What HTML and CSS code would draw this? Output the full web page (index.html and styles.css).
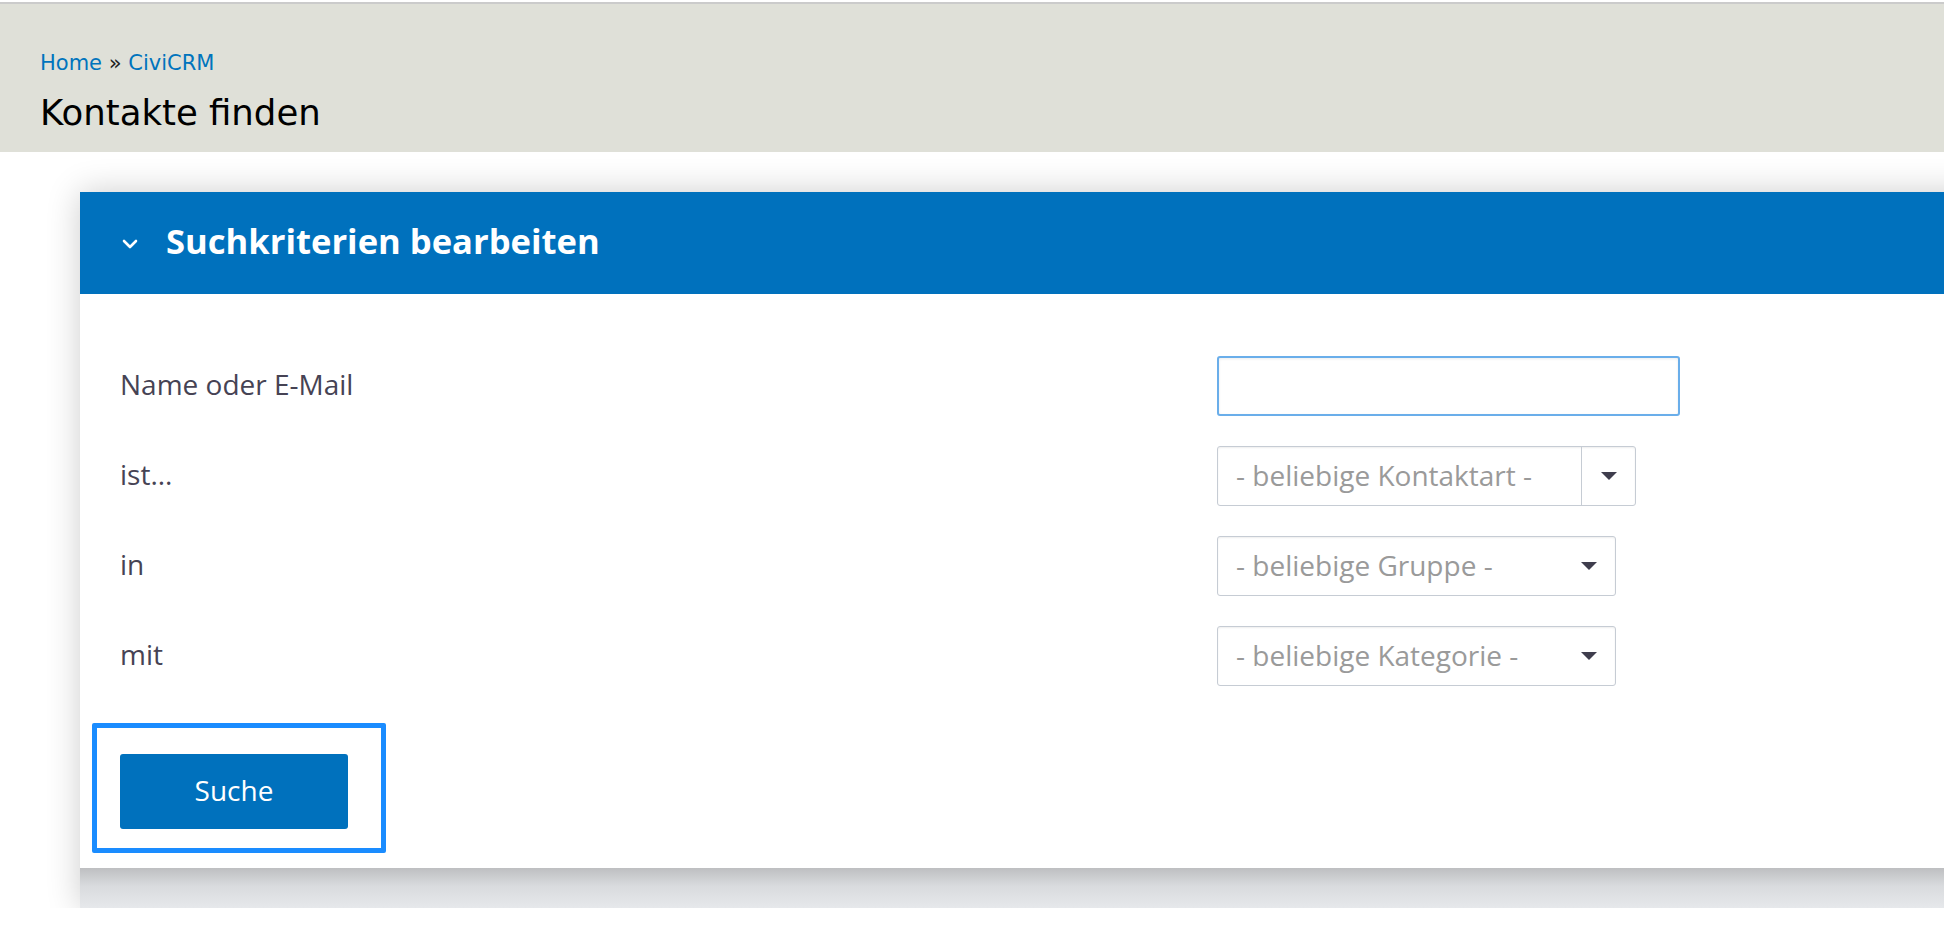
FILE: index.html
```html
<!DOCTYPE html>
<html lang="de">
<head>
  <meta charset="UTF-8">
  <title>Kontakte finden | CiviCRM</title>
  <link rel="stylesheet" href="styles.css">
</head>
<body>

<div class="branding">
  <div class="breadcrumb"><a href="#">Home</a> » <a href="#">CiviCRM</a></div>
  <h1 class="page-title">Kontakte finden</h1>
</div>

<div class="main">
  <div class="panel">
    <div class="card">
      <div class="card-header">
        <svg class="chevron" width="16" height="11" viewBox="0 0 16 11">
          <polyline points="2,2 8,8 14,2" fill="none" stroke="#fff" stroke-width="2.6" stroke-linecap="round" stroke-linejoin="round"/>
        </svg>
        <span class="card-title">Suchkriterien bearbeiten</span>
      </div>

      <div class="card-body">
        <div class="form-grid">
          <label class="form-label">Name oder E-Mail</label>
          <div class="form-field"><input class="text-input" type="text"></div>

          <label class="form-label">ist...</label>
          <div class="form-field">
            <div class="select select-split">
              <span class="select-text">- beliebige Kontaktart -</span>
              <span class="select-arrow-box"><span class="arrow"></span></span>
            </div>
          </div>

          <label class="form-label">in</label>
          <div class="form-field">
            <div class="select">
              <span class="select-text">- beliebige Gruppe -</span>
              <span class="arrow"></span>
            </div>
          </div>

          <label class="form-label">mit</label>
          <div class="form-field">
            <div class="select">
              <span class="select-text">- beliebige Kategorie -</span>
              <span class="arrow"></span>
            </div>
          </div>
        </div>

        <div class="highlight">
          <button class="btn-search" type="button">Suche</button>
        </div>
      </div>
    </div>
    <div class="next-section"></div>
  </div>
</div>

</body>
</html>
```

FILE: styles.css
```css
html, body {
  overflow-x: hidden;
}
body {
  margin: 0;
  padding-top: 2px;
  background-color: #fff;
  font-family: "Open Sans", "Liberation Sans", sans-serif;
  color: #464354;
}
.branding {
  border-top: 2px solid #cbcbcb;
  background-color: #dfe0d8;
  padding: 47px 40px 19px;
}
.breadcrumb {
  font-family: "DejaVu Sans", sans-serif;
  font-size: 21px;
  line-height: 24px;
  color: #222;
}
.breadcrumb a {
  color: #0074bd;
  text-decoration: none;
}
.page-title {
  margin: 18px 0 0;
  font-family: "DejaVu Sans", sans-serif;
  font-size: 35.5px;
  line-height: 40px;
  font-weight: normal;
  color: #000;
}
.main {
  padding: 40px 0 0 80px;
}
.panel {
  margin-right: -40px;
  box-shadow: 0 0 32px rgba(0, 0, 0, 0.2);
}
.card {
  background-color: #fff;
}
.card-header {
  display: flex;
  align-items: center;
  height: 102px;
  padding-left: 42px;
  background-color: #0071bd;
}
.chevron {
  display: block;
  margin-right: 28px;
  margin-top: 2px;
}
.card-title {
  padding-bottom: 5px;
  font-size: 34.6px;
  font-weight: 700;
  color: #fff;
  line-height: 40px;
}
.card-body {
  padding: 62px 40px 15px;
}
.form-grid {
  display: grid;
  grid-template-columns: 1097px auto;
  grid-auto-rows: 60px;
  row-gap: 30px;
}
.form-label {
  display: flex;
  align-items: center;
  padding-bottom: 5px;
  font-size: 28px;
}
.form-field {
  display: flex;
  align-items: center;
}
.text-input {
  box-sizing: border-box;
  width: 463px;
  height: 60px;
  border: 2px solid #6aaeea;
  border-radius: 3px;
  box-shadow: inset 0 1px 3px rgba(0, 0, 0, 0.08);
  outline: none;
  background: #fff;
}
.select {
  box-sizing: border-box;
  display: flex;
  align-items: center;
  justify-content: space-between;
  width: 399px;
  height: 60px;
  padding: 0 18px 0 18px;
  border: 1px solid #c6ccd4;
  border-radius: 3px;
  box-shadow: inset 0 1px 2px rgba(0, 0, 0, 0.07);
  background: #fff;
}
.select-split {
  width: 419px;
  padding-right: 0;
}
.select-text {
  font-size: 28px;
  color: #9a9a9a;
  padding-bottom: 3px;
}
.select-arrow-box {
  display: flex;
  align-items: center;
  justify-content: center;
  width: 53px;
  height: 100%;
  border-left: 1px solid #c6ccd4;
}
.arrow {
  display: block;
  width: 0;
  height: 0;
  border-left: 8px solid transparent;
  border-right: 8px solid transparent;
  border-top: 8px solid #3f3d4d;
}
.highlight {
  display: inline-block;
  margin: 37px 0 0 -28px;
  padding: 26px 33px 19px 23px;
  border: 5px solid #1a8cff;
  border-radius: 2px;
}
.btn-search {
  display: block;
  width: 228px;
  height: 75px;
  border: none;
  border-radius: 3px;
  background-color: #0071bd;
  color: #fff;
  font-family: "Open Sans", "Liberation Sans", sans-serif;
  font-size: 28px;
  padding: 0 0 3px;
}
.next-section {
  height: 40px;
  background: linear-gradient(#bebfc1, #d9dbde 45%, #e6e8eb);
}
```
